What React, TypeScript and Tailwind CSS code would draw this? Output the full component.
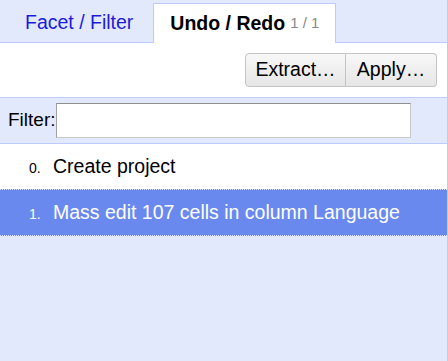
export default function App() {
  return (
    <div className="w-[448px] h-[361px] bg-[#e3e9fd] border-r border-[#bccbfa] font-['Liberation_Sans',Arial,sans-serif] text-[19.5px] text-black flex flex-col">
      <div className="h-[43px] flex items-end border-b border-[#bccbfa] pl-[9px]">
        <div className="h-[39px] px-[16px] flex items-center text-[#1b1bd9] mr-[4px]">Facet / Filter</div>
        <div className="h-[40px] -mb-px bg-white border border-b-0 border-[#bccbfa] px-[16px] flex items-center">
          <span className="font-bold">Undo / Redo</span>
          <span className="ml-[5px] text-[15px] text-[#888]">1 / 1</span>
        </div>
      </div>
      <div className="h-[55px] bg-white border-b border-[#bccbfa] flex items-center justify-end pr-[10px]">
        <div className="flex">
          <button className="h-[34px] w-[101px] rounded-l-[4px] border border-[#c4c4c4] bg-gradient-to-b from-[#f8f8f8] to-[#e6e6e6]">Extract…</button>
          <button className="h-[34px] w-[91px] rounded-r-[4px] border border-l-0 border-[#c4c4c4] bg-gradient-to-b from-[#f8f8f8] to-[#e6e6e6]">Apply…</button>
        </div>
      </div>
      <div className="h-[46px] border-b border-[#bccbfa] flex items-center pl-[8px]">
        <span className="text-[19px]">Filter:</span>
        <input className="w-[355px] h-[35px] bg-white border border-[#c8c8c8] border-t-[#8e8e8e] border-l-[#a0a0a0]" />
      </div>
      <div className="h-[45px] bg-white flex items-center pl-[29px]">
        <span className="w-[24px] text-[14px] pt-[4px]">0.</span>
        <span>Create project</span>
      </div>
      <div className="h-[47px] bg-[#6a89ee] border-y border-dotted border-[#d6def9] flex items-center pl-[29px] text-white">
        <span className="w-[24px] text-[14px] pt-[4px]">1.</span>
        <span>Mass edit 107 cells in column Language</span>
      </div>
    </div>
  )
}
